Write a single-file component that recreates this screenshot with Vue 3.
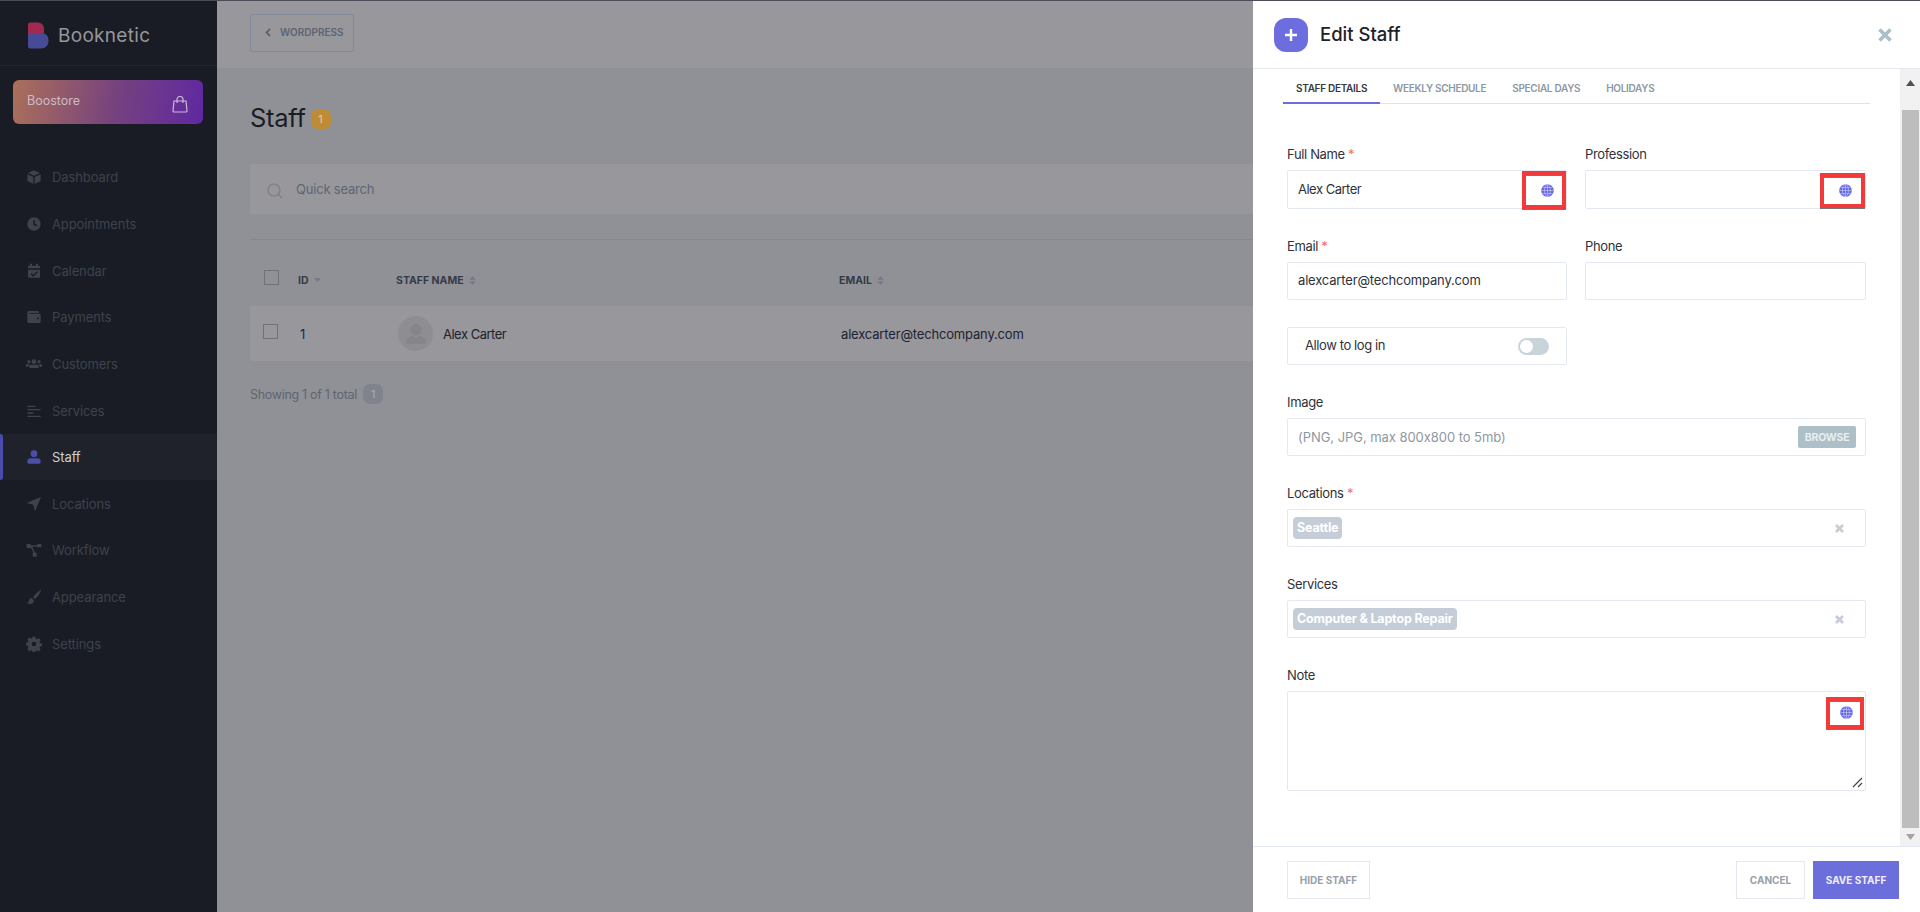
<script setup>
const nav = [
  { label: 'Dashboard', d: 'M12 2 3 6l9 4 9-4-9-4Zm-10 6v10l9 4.500V12L2 8Zm20 0-9 4v10.500l9-4.500V8Z' },
  { label: 'Appointments', d: 'M12 2a10 10 0 1 0 0 20 10 10 0 0 0 0-20Zm-1.200 4h2.400v5.400l3.800 2.300-1.200 2L10.800 13V6Z' },
  { label: 'Calendar', d: 'M6 1h3v3h6V1h3v3h3v4H3V4h3V1ZM3 10h18v12H3V10Zm13.500 2.500L11 18l-2.700-2.600-1.400 1.400 4.100 4 6.900-7-1.400-1.300Z' },
  { label: 'Payments', d: 'M4 3h15v3H5v1h16a1 1 0 0 1 1 1v11a2 2 0 0 1-2 2H4a2 2 0 0 1-2-2V5a2 2 0 0 1 2-2Zm14 9.500a1.500 1.500 0 1 0 0 3 1.500 1.500 0 0 0 0-3Z' },
  { label: 'Customers', d: 'M12 5a3.500 3.500 0 1 1 0 7 3.500 3.500 0 0 1 0-7ZM4.500 6a2.500 2.500 0 1 1 0 5 2.500 2.500 0 0 1 0-5Zm15 0a2.500 2.500 0 1 1 0 5 2.500 2.500 0 0 1 0-5ZM7 13h10a2 2 0 0 1 2 2v3H5v-3a2 2 0 0 1 2-2Zm-7 .500A2 2 0 0 1 2 12h2.500L3.500 16H0v-2.500Zm24 0V16h-3.500l-1-4H22a2 2 0 0 1 2 1.500Z' },
  { label: 'Services', d: 'M2 4h12v2H2V4Zm0 5h20v2H2V9Zm0 5h9v2H2v-2Zm0 5h20v2H2v-2Z' },
  { label: 'Staff', d: 'M12 2a5 5 0 1 1 0 10 5 5 0 0 1 0-10ZM7 14h10a5 5 0 0 1 5 5v1a2 2 0 0 1-2 2H4a2 2 0 0 1-2-2v-1a5 5 0 0 1 5-5Z', active: true },
  { label: 'Locations', d: 'M22.500 1.500 13.500 23 11 13 1 10.500l21.500-9Z' },
  { label: 'Workflow', d: 'M1 3h6v6H1V3Zm16 0h6v5h-6V3Zm-7 13h6v6h-6v-6ZM7 5h10v2H9.500l4 9h-2.200L7 7.500V5Z' },
  { label: 'Appearance', d: 'M22.500 1.500c-3 1-9 6.500-12 11l2.500 2.500c4.500-3 9.500-10 9.500-13.500ZM8.500 13.500c-2.500 0-4 1.800-4 4 0 1.500-1.500 2.500-3.500 2.500 1.500 2 3.500 2.500 5.500 2.500 3.500 0 5.500-2.500 5-5.500l-3-3.500Z' },
  { label: 'Settings', d: 'M10 1h4l.6 3 2 .9 2.600-1.700 2.800 2.800-1.700 2.600.9 2 3 .6v4l-3 .6-.9 2 1.700 2.600-2.800 2.800-2.600-1.700-2 .9-.6 3h-4l-.6-3-2-.9-2.600 1.700L2 19.400l1.700-2.600-.9-2-3-.6v-4l3-.6.9-2L2 5l2.800-2.800 2.600 1.700 2-.9.6-3Zm2 7.500a3.500 3.500 0 1 0 0 7 3.500 3.500 0 0 0 0-7Z' }
]
const tabs = ['Staff Details', 'Weekly Schedule', 'Special Days', 'Holidays']
</script>

<template>
  <div class="page">
    <div class="topline"></div>
    <div class="shell">
      <aside class="sidebar">
        <div class="brand">
          <svg class="logo" width="22" height="27" viewBox="0 0 22 27">
            <path d="M1 11V3a2.500 2.500 0 0 1 2.500-2.500H11A6 6 0 0 1 17 6.500V11Z" fill="#a22a50" />
            <path d="M1 11h14a6.500 6.500 0 0 1 6.500 6.500v2A7 7 0 0 1 14.500 26.500H3A2 2 0 0 1 1 24.500Z" fill="#474a95" />
          </svg>
          <span class="brand-name">Booknetic</span>
        </div>
        <div class="boostore">
          <span>Boostore</span>
          <svg width="16" height="17" viewBox="0 0 16 17" fill="none" stroke="#cbb8d8" stroke-width="1.200">
            <path d="M2 5h12l1 10a1 1 0 0 1-1 1H2a1 1 0 0 1-1-1L2 5Z" />
            <path d="M5 7V3.500a3 3 0 0 1 6 0V7" />
          </svg>
        </div>
        <nav class="nav">
          <a v-for="item in nav" :key="item.label" class="nav-item" :class="{ active: item.active }">
            <svg class="nav-icon" width="16" height="16" viewBox="0 0 24 24"><path :d="item.d" fill="currentColor" /></svg>
            <span>{{ item.label }}</span>
          </a>
        </nav>
      </aside>

      <main class="main">
        <header class="main-head">
          <div class="wp-btn">
            <svg width="6" height="9" viewBox="0 0 6 9" fill="none" stroke="#5c6472" stroke-width="1.800"><path d="M5 1 1.500 4.500 5 8" /></svg>
            <span>WORDPRESS</span>
          </div>
        </header>
        <div class="content">
          <div class="title-row">
            <h1>Staff</h1>
            <span class="count">1</span>
          </div>
          <div class="search">
            <svg width="16" height="16" viewBox="0 0 16 16" fill="none" stroke="#74808c" stroke-width="1.200"><circle cx="7" cy="7" r="6" /><path d="m11.500 11.500 3.500 3.500" /></svg>
            <span>Quick search</span>
          </div>
          <div class="divider"></div>
          <div class="thead table-grid">
            <div><span class="check check-head"></span></div>
            <div class="th">ID <svg width="7" height="4" viewBox="0 0 7 4"><path d="M0 0h7L3.500 4Z" fill="#747b88" /></svg></div>
            <div class="th">STAFF NAME <svg class="sort" width="7" height="9" viewBox="0 0 7 9"><path d="M0 3.800 3.500 0 7 3.800ZM0 5.200h7L3.500 9Z" fill="#747b88" /></svg></div>
            <div class="th th-email">EMAIL <svg class="sort" width="7" height="9" viewBox="0 0 7 9"><path d="M0 3.800 3.500 0 7 3.800ZM0 5.200h7L3.500 9Z" fill="#747b88" /></svg></div>
          </div>
          <div class="row table-grid">
            <div><span class="check check-row"></span></div>
            <div class="row-id">1</div>
            <div class="person">
              <span class="avatar">
                <svg width="20" height="22" viewBox="0 0 20 22"><path d="M10 1a5.500 5.500 0 0 1 5.500 5.500c0 3-2.500 6-5.500 6s-5.500-3-5.500-6A5.500 5.500 0 0 1 10 1ZM6 13c2.500 1.500 5.500 1.500 8 0 3 .5 5.500 2 5.500 4.500V21H.500v-3.500C.500 15 3 13.500 6 13Z" fill="#85858a" /></svg>
              </span>
              <span class="name">Alex Carter</span>
            </div>
            <div class="row-email">alexcarter@techcompany.com</div>
          </div>
          <div class="showing">
            <span>Showing 1 of 1 total</span>
            <span class="total">1</span>
          </div>
        </div>
      </main>

      <section class="panel">
        <header class="panel-head">
          <span class="plus">
            <svg width="12" height="12" viewBox="0 0 12 12"><path d="M4.800 0h2.400v4.800H12v2.400H7.200V12H4.800V7.200H0V4.800h4.800Z" fill="#fff" /></svg>
          </span>
          <h2>Edit Staff</h2>
          <svg class="close" width="14" height="14" viewBox="0 0 14 14"><path d="M1.500 1.500 12.500 12.500M12.500 1.500 1.500 12.500" stroke="#a9bfc9" stroke-width="3.500" /></svg>
        </header>

        <div class="panel-body">
          <div class="scroll-content">
            <div class="tabs">
              <div v-for="(t, i) in tabs" :key="t" class="tab" :class="{ current: i === 0 }">{{ t }}</div>
            </div>
            <form class="form" @submit.prevent>
              <div class="grid2 first">
                <div>
                  <label>Full Name <i>*</i></label>
                  <div class="box tall"><span class="name">Alex Carter</span>
                    <span class="mark mark-a"><svg class="globe" viewBox="0 0 14 14"><use href="#globe-shape" /></svg></span>
                  </div>
                </div>
                <div>
                  <label>Profession</label>
                  <div class="box tall">
                    <span class="mark mark-b"><svg class="globe" viewBox="0 0 14 14"><use href="#globe-shape" /></svg></span>
                  </div>
                </div>
              </div>
              <div class="grid2 second">
                <div>
                  <label>Email <i>*</i></label>
                  <div class="box">alexcarter@techcompany.com</div>
                </div>
                <div>
                  <label>Phone</label>
                  <div class="box"></div>
                </div>
              </div>
              <div class="grid2 third">
                <div class="box allow">
                  <span class="allow-text">Allow to log in</span>
                  <span class="toggle"><span class="knob"></span></span>
                </div>
              </div>
              <div class="field">
                <label>Image</label>
                <div class="box file">
                  <span class="hint">(PNG, JPG, max 800x800 to 5mb)</span>
                  <span class="browse">BROWSE</span>
                </div>
              </div>
              <div class="field">
                <label>Locations <i>*</i></label>
                <div class="box select">
                  <span class="tag">Seattle</span>
                  <svg class="clear" width="9" height="9" viewBox="0 0 9 9"><path d="M1 1 8 8M8 1 1 8" stroke="#c5cdd6" stroke-width="2.800" /></svg>
                </div>
              </div>
              <div class="field">
                <label>Services</label>
                <div class="box select">
                  <span class="tag">Computer &amp; Laptop Repair</span>
                  <svg class="clear" width="9" height="9" viewBox="0 0 9 9"><path d="M1 1 8 8M8 1 1 8" stroke="#c5cdd6" stroke-width="2.800" /></svg>
                </div>
              </div>
              <div class="field">
                <label>Note</label>
                <div class="box note">
                  <span class="mark mark-c"><svg class="globe" viewBox="0 0 14 14"><use href="#globe-shape" /></svg></span>
                  <svg class="resize" width="11" height="11" viewBox="0 0 11 11" fill="none" stroke="#444" stroke-width="1.200"><path d="M1 10 10 1M6 10l4-4" /></svg>
                </div>
              </div>
            </form>
          </div>
          <div class="scrollbar">
            <svg width="9" height="6" viewBox="0 0 9 6"><path d="M0 6 4.500 0 9 6Z" fill="#505050" /></svg>
            <div class="thumb"></div>
            <svg width="9" height="6" viewBox="0 0 9 6"><path d="M0 0h9L4.500 6Z" fill="#a3a3a3" /></svg>
          </div>
        </div>

        <footer class="panel-foot">
          <span class="btn ghost hide">HIDE STAFF</span>
          <span class="btn ghost cancel">CANCEL</span>
          <span class="btn save">SAVE STAFF</span>
        </footer>
      </section>
    </div>

    <svg width="0" height="0" class="defs">
      <defs>
        <g id="globe-shape">
          <circle cx="7" cy="7" r="6.800" fill="#6568e6" />
          <path d="M7 .500v13M.500 7h13M1.500 3.800h11M1.500 10.200h11" stroke="#dfe0fa" stroke-width=".55" fill="none" />
          <ellipse cx="7" cy="7" rx="3.200" ry="6.500" stroke="#dfe0fa" stroke-width=".55" fill="none" />
        </g>
      </defs>
    </svg>
  </div>
</template>

<style>
html, body { margin: 0; background: #909196; overflow: hidden; }
</style>

<style scoped>
.page { width: 1920px; height: 912px; display: flex; flex-direction: column; overflow: hidden; font-family: Inter, "Open Sans", "Liberation Sans", sans-serif; font-size: 13px; font-variant-ligatures: no-contextual; font-feature-settings: "calt" 0; }
.topline { height: 1px; background: #4a4c58; flex: none; }
.shell { flex: 1; display: flex; min-height: 0; }
.defs { position: absolute; }

.sidebar { width: 217px; flex: none; background: #191c24; }
.brand { height: 65px; border-bottom: 1px solid #24272f; display: flex; align-items: center; padding-left: 27px; gap: 9px; box-sizing: border-box; }
.logo { margin-top: 4px; }
.brand-name { font-size: 19px; color: #96979b; letter-spacing: .3px; margin-top: 4px; }
.boostore { margin: 14px 14px 30px 13px; height: 44px; border-radius: 6px; background: linear-gradient(100deg, #ac7059 0%, #75417f 55%, #5f28a2 100%); color: #c9bcc6; display: flex; justify-content: space-between; padding: 13px 15px 0 14px; box-sizing: border-box; font-size: 12.500px; }
.boostore svg { margin-top: 3px; }
.nav { display: flex; flex-direction: column; }
.nav-item { height: 46.650px; display: flex; align-items: center; gap: 10px; padding-left: 26px; color: #3e424d; box-sizing: border-box; position: relative; font-size: 13px; letter-spacing: -.1px; }
.nav-icon { flex: none; }
.nav-item.active { background: #1f222a; color: #cfd0d3; }
.nav-item.active .nav-icon { color: #4c4fa8; }
.nav-item.active::before { content: ""; position: absolute; left: 0; top: 0; bottom: 0; width: 3px; background: #4a4cab; border-radius: 0 3px 3px 0; }

.main { flex: 1; min-width: 0; background: #909196; }
.main-head { height: 67px; background: #98979b; padding: 13px 0 0 33px; box-sizing: border-box; }
.wp-btn { width: 104px; height: 38px; border: 1px solid #7f8a9a; border-radius: 2px; box-sizing: border-box; display: flex; align-items: center; gap: 9px; padding: 0 0 2px 14px; font-size: 10px; font-weight: 600; color: #5c6472; }
.content { padding-left: 33px; }
.title-row { height: 96px; display: flex; align-items: center; gap: 5px; padding-top: 3px; box-sizing: border-box; }
.title-row h1 { margin: 0; font-size: 25.500px; font-weight: 400; color: #1b1d26; letter-spacing: -.3px; }
.count { flex: none; width: 20px; height: 20px; border-radius: 7px; background: #bf8c36; color: #e0cda9; font-size: 11px; display: flex; align-items: center; justify-content: center; margin-top: 3px; }
.search { height: 50px; background: #98979b; display: flex; align-items: center; gap: 13px; padding-left: 17px; color: #5d6675; font-size: 13px; letter-spacing: -.2px; }
.search svg { margin-top: 4px; }
.search span { margin-bottom: 1px; }
.divider { height: 1px; background: #858790; margin-top: 25px; }
.table-grid { display: grid; grid-template-columns: 48px 98px 442px 1fr; align-items: center; }
.thead { height: 66px; padding-top: 14px; box-sizing: border-box; }
.th { font-size: 10.500px; font-weight: 700; color: #363a46; display: flex; align-items: center; gap: 5px; }
.th-email { padding-left: 1px; }
.check { display: block; width: 15px; height: 15px; border: 1px solid #70727a; box-sizing: border-box; }
.check-head { margin: -6px 0 0 14px; }
.check-row { margin: -4px 0 0 13px; }
.row { height: 55px; background: #98979b; color: #1e2230; font-size: 13px; }
.row-id { padding-left: 2px; color: #1c2a45; }
.row-email { padding-left: 3px; letter-spacing: -.17px; }
.person { display: flex; align-items: center; gap: 10px; padding-left: 2px; }
.name { letter-spacing: -.5px; }
.avatar { width: 35px; height: 35px; border-radius: 50%; background: #8e8e92; display: flex; align-items: center; justify-content: center; }
.showing { display: flex; align-items: center; gap: 6px; height: 44px; margin-top: 11px; color: #5f6572; font-size: 12.500px; letter-spacing: -.3px; }
.total { flex: none; width: 20px; height: 20px; border-radius: 7px; background: #80838e; color: #a7acb6; font-size: 11px; display: flex; align-items: center; justify-content: center; }

.panel { width: 667px; flex: none; background: #fff; display: flex; flex-direction: column; color: #2a2d36; }
.panel-head { height: 68px; flex: none; border-bottom: 1px solid #e4e8f1; display: flex; align-items: center; padding-left: 21px; box-sizing: border-box; position: relative; }
.plus { width: 34px; height: 34px; border-radius: 12px; background: #6c6ee0; display: flex; align-items: center; justify-content: center; }
.panel-head h2 { margin: 0 0 2px 12px; font-size: 18.500px; font-weight: 500; color: #1e212a; }
.close { margin-left: auto; margin-right: 28px; }
.panel-body { flex: 1; min-height: 0; display: flex; }
.scroll-content { flex: 1; padding: 0 30px; min-width: 0; }
.tabs { display: flex; height: 35px; border-bottom: 1px solid #dfe3ea; width: 587px; box-sizing: border-box; }
.tab { padding: 0 13px; line-height: 38px; font-size: 10px; font-weight: 600; text-transform: uppercase; color: #8f98a4; margin-bottom: -1px; letter-spacing: -.3px; }
.tab.current { color: #353943; border-bottom: 2px solid #6c6ee0; }
.form { margin: 42px 0 0 4px; width: 579px; }
.grid2 { display: grid; grid-template-columns: 280px 281px; column-gap: 18px; }
.first { margin-bottom: 29px; }
.second { margin-bottom: 27px; }
.third { margin-bottom: 29px; }
.field { margin-bottom: 29px; }
label { display: block; height: 24px; line-height: 17px; font-size: 13px; color: #2f323b; letter-spacing: -.35px; }
label i { color: #f3705f; font-style: normal; }
.box { height: 38px; border: 1px solid #e4e8f1; border-radius: 2px; box-sizing: border-box; display: flex; align-items: center; padding: 0 0 2px 10px; position: relative; color: #2f323b; font-size: 13px; letter-spacing: -.17px; }
.box.tall { height: 39px; }
.mark { position: absolute; border: 4px solid #f23a3a; background: #fff; box-sizing: border-box; display: flex; align-items: center; justify-content: center; box-shadow: inset 0 1px 0 #777, 0 1px 0 #777; }
.mark-a { left: 234px; top: 0; width: 44px; height: 38px; }
.mark-a .globe { margin-left: 6px; }
.mark-b { left: 234px; top: 2px; width: 45px; height: 35px; }
.mark-b .globe { margin-left: 6px; }
.mark-c { left: 538px; top: 5px; width: 38px; height: 32px; }
.mark-c .globe { margin-bottom: 2px; }
.globe { width: 13px; height: 13px; margin-left: 3px; }
.allow { justify-content: space-between; padding: 0 17px 2px 17px; }
.allow-text { letter-spacing: -.4px; }
.toggle { width: 31px; height: 17px; border-radius: 9px; background: #c9d4da; display: block; padding: 2px; box-sizing: border-box; margin-top: 2px; }
.knob { display: block; width: 13px; height: 13px; border-radius: 50%; background: #fff; }
.file { justify-content: space-between; padding: 0 9px 0 10px; }
.hint { color: #8f979f; letter-spacing: -.05px; }
.browse { width: 58px; height: 22px; border-radius: 2px; background: #adbfc7; color: #e8eef1; font-size: 10.500px; font-weight: 700; display: flex; align-items: center; justify-content: center; }
.select { padding: 0 21px 0 5px; justify-content: space-between; }
.tag { height: 22px; padding: 0 4px; border-radius: 4px; background: #c5cdd8; color: #fff; font-weight: 700; font-size: 12.500px; line-height: 22px; }
.note { height: 100px; }
.resize { position: absolute; right: 2px; bottom: 2px; }
.scrollbar { width: 20px; flex: none; background: #f1f1f1; display: flex; flex-direction: column; align-items: center; justify-content: space-between; box-sizing: border-box; }
.scrollbar svg:first-child { margin: 11px 0 24px; }
.scrollbar svg:last-child { margin: 6px 0 6px; }
.thumb { width: 17px; flex: 1; background: #bdbdbd; }
.panel-foot { height: 66px; flex: none; border-top: 1px solid #e4e8f1; box-sizing: border-box; display: flex; align-items: center; padding: 0 21px 0 34px; gap: 8px; }
.btn { height: 38px; display: flex; align-items: center; justify-content: center; font-size: 10px; font-weight: 700; box-sizing: border-box; }
.ghost { border: 1px solid #e4e8f1; color: #97a0ac; }
.hide { width: 83px; }
.cancel { width: 69px; margin-left: auto; }
.save { width: 86px; background: #6c6edb; color: #eef; }
</style>
